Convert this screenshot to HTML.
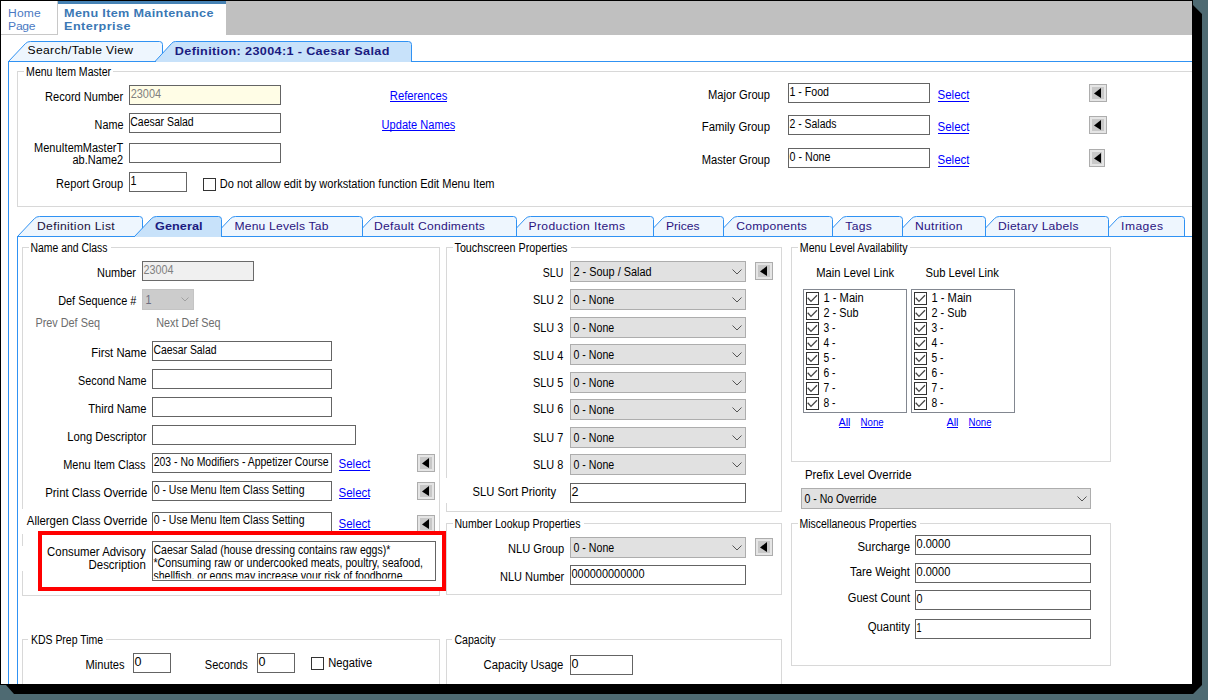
<!DOCTYPE html>
<html><head><meta charset="utf-8"><style>
html,body{margin:0;padding:0;width:1208px;height:700px;overflow:hidden;background:#4e6a72}
svg{display:block}
text{font-family:"Liberation Sans",sans-serif}
</style></head><body>
<svg width="1208" height="700" viewBox="0 0 1208 700">
<rect x="0" y="0" width="1208" height="700" fill="#4e6a72"/>
<polygon points="0,0 1193,0 1193,5 1202,14 1202,685 1193,694 14,694 6,685 0,685" fill="#000"/>
<rect x="1" y="1" width="1191" height="683" fill="#ffffff"/>
<rect x="1" y="34" width="57" height="1" fill="#c8c8c8"/>
<rect x="57" y="1" width="1" height="34" fill="#c8c8c8"/>
<rect x="58" y="1" width="168" height="3" fill="#4682b4"/>
<rect x="226" y="1" width="966" height="34" fill="#c0c0c0"/>
<g transform="translate(8.1,0) scale(1.1,1)"><text x="0" y="17" font-size="11" font-weight="400" fill="#4a78c2" textLength="29.64" lengthAdjust="spacing" font-family="Liberation Sans">Home</text></g>
<g transform="translate(8.1,0) scale(1.1,1)"><text x="0" y="30" font-size="11" font-weight="400" fill="#4a78c2" textLength="24.91" lengthAdjust="spacing" font-family="Liberation Sans">Page</text></g>
<g transform="translate(64.1,0) scale(1.15,1)"><text x="0" y="17" font-size="11" font-weight="700" fill="#3a78b5" textLength="129.91" lengthAdjust="spacing" font-family="Liberation Sans">Menu Item Maintenance</text></g>
<g transform="translate(64.1,0) scale(1.15,1)"><text x="0" y="30" font-size="11" font-weight="700" fill="#3a78b5" textLength="57.74" lengthAdjust="spacing" font-family="Liberation Sans">Enterprise</text></g>
<path d="M8.5,61.5 L25.5,43.5 Q27.5,41.5 30.5,41.5 L159.5,41.5 Q162.5,41.5 162.5,44.5 L162.5,61.5 Z" fill="#eef6fe" stroke="#3092f3" stroke-width="1" />
<path d="M155,61.5 L171.5,43.5 Q173,41.5 175.5,41.5 L408.5,41.5 Q411.5,41.5 411.5,44.5 L411.5,62 L155,62 Z" fill="#c8e2fa" stroke="none" stroke-width="1" />
<path d="M155,61.5 L171.5,43.5 Q173,41.5 175.5,41.5 L408.5,41.5 Q411.5,41.5 411.5,44.5 L411.5,61.5" fill="none" stroke="#3092f3" stroke-width="1" />
<rect x="8" y="61" width="148" height="1" fill="#3092f3"/>
<rect x="411" y="61" width="781" height="1" fill="#3092f3"/>
<rect x="8" y="61" width="1" height="623" fill="#3092f3"/>
<g transform="translate(27.6,0) scale(1.1,1)"><text x="0" y="54.5" font-size="11" font-weight="400" fill="#000" textLength="95.82" lengthAdjust="spacing" font-family="Liberation Sans">Search/Table View</text></g>
<g transform="translate(174.8,0) scale(1.15,1)"><text x="0" y="55" font-size="11" font-weight="700" fill="#1a1a80" textLength="186.61" lengthAdjust="spacing" font-family="Liberation Sans">Definition: 23004:1 - Caesar Salad</text></g>
<rect x="17" y="71" width="1175" height="1" fill="#d8d8d8"/>
<rect x="17" y="206" width="1175" height="1" fill="#d8d8d8"/>
<rect x="17" y="71" width="1" height="136" fill="#d8d8d8"/>
<rect x="24" y="64" width="89" height="12" fill="#fff"/>
<text x="26.1" y="76" font-size="12" font-weight="400" fill="#000" textLength="85.0" lengthAdjust="spacingAndGlyphs" font-family="Liberation Sans">Menu Item Master</text>
<text x="45.1" y="100.8" font-size="12" font-weight="400" fill="#000" textLength="78.1" lengthAdjust="spacingAndGlyphs" font-family="Liberation Sans">Record Number</text>
<text x="94.6" y="128.6" font-size="12" font-weight="400" fill="#000" textLength="28.8" lengthAdjust="spacingAndGlyphs" font-family="Liberation Sans">Name</text>
<text x="34.1" y="152" font-size="12" font-weight="400" fill="#000" textLength="89.0" lengthAdjust="spacingAndGlyphs" font-family="Liberation Sans">MenuItemMasterT</text>
<text x="72.5" y="164" font-size="12" font-weight="400" fill="#000" textLength="50.6" lengthAdjust="spacingAndGlyphs" font-family="Liberation Sans">ab.Name2</text>
<text x="56.1" y="187.6" font-size="12" font-weight="400" fill="#000" textLength="67.0" lengthAdjust="spacingAndGlyphs" font-family="Liberation Sans">Report Group</text>
<rect x="129" y="85" width="152" height="20" fill="#fffde6"/>
<rect x="129" y="85" width="152" height="1" fill="#646464"/>
<rect x="129" y="104" width="152" height="1" fill="#646464"/>
<rect x="129" y="85" width="1" height="20" fill="#646464"/>
<rect x="280" y="85" width="1" height="20" fill="#646464"/>
<text x="130.7" y="98" font-size="12" font-weight="400" fill="#808080" textLength="30.4" lengthAdjust="spacingAndGlyphs" font-family="Liberation Sans">23004</text>
<rect x="129" y="113" width="152" height="20" fill="#ffffff"/>
<rect x="129" y="113" width="152" height="1" fill="#646464"/>
<rect x="129" y="132" width="152" height="1" fill="#646464"/>
<rect x="129" y="113" width="1" height="20" fill="#646464"/>
<rect x="280" y="113" width="1" height="20" fill="#646464"/>
<text x="130.3" y="126" font-size="12" font-weight="400" fill="#000" textLength="63.4" lengthAdjust="spacingAndGlyphs" font-family="Liberation Sans">Caesar Salad</text>
<rect x="129" y="143" width="152" height="20" fill="#ffffff"/>
<rect x="129" y="143" width="152" height="1" fill="#646464"/>
<rect x="129" y="162" width="152" height="1" fill="#646464"/>
<rect x="129" y="143" width="1" height="20" fill="#646464"/>
<rect x="280" y="143" width="1" height="20" fill="#646464"/>
<rect x="129" y="172" width="58" height="20" fill="#ffffff"/>
<rect x="129" y="172" width="58" height="1" fill="#646464"/>
<rect x="129" y="191" width="58" height="1" fill="#646464"/>
<rect x="129" y="172" width="1" height="20" fill="#646464"/>
<rect x="186" y="172" width="1" height="20" fill="#646464"/>
<text x="130.5" y="185" font-size="12" font-weight="400" fill="#000" textLength="6.0" lengthAdjust="spacingAndGlyphs" font-family="Liberation Sans">1</text>
<rect x="203" y="178" width="13" height="13" fill="#ffffff"/>
<rect x="203" y="178" width="13" height="1" fill="#333333"/>
<rect x="203" y="190" width="13" height="1" fill="#333333"/>
<rect x="203" y="178" width="1" height="13" fill="#333333"/>
<rect x="215" y="178" width="1" height="13" fill="#333333"/>
<text x="219.8" y="187.6" font-size="12" font-weight="400" fill="#000" textLength="274.7" lengthAdjust="spacingAndGlyphs" font-family="Liberation Sans">Do not allow edit by workstation function Edit Menu Item</text>
<text x="389.8" y="99.5" font-size="12" font-weight="400" fill="#0000ff" textLength="57.6" lengthAdjust="spacingAndGlyphs" font-family="Liberation Sans">References</text>
<rect x="390" y="101" width="57" height="1" fill="#0000ff"/>
<text x="381.6" y="128.6" font-size="12" font-weight="400" fill="#0000ff" textLength="73.8" lengthAdjust="spacingAndGlyphs" font-family="Liberation Sans">Update Names</text>
<rect x="382" y="130" width="73" height="1" fill="#0000ff"/>
<text x="708.0" y="98.6" font-size="12" font-weight="400" fill="#000" textLength="62.0" lengthAdjust="spacingAndGlyphs" font-family="Liberation Sans">Major Group</text>
<text x="701.8" y="130.6" font-size="12" font-weight="400" fill="#000" textLength="68.2" lengthAdjust="spacingAndGlyphs" font-family="Liberation Sans">Family Group</text>
<text x="701.8" y="163.5" font-size="12" font-weight="400" fill="#000" textLength="68.2" lengthAdjust="spacingAndGlyphs" font-family="Liberation Sans">Master Group</text>
<rect x="788" y="83" width="142" height="20" fill="#ffffff"/>
<rect x="788" y="83" width="142" height="1" fill="#646464"/>
<rect x="788" y="102" width="142" height="1" fill="#646464"/>
<rect x="788" y="83" width="1" height="20" fill="#646464"/>
<rect x="929" y="83" width="1" height="20" fill="#646464"/>
<text x="789.5" y="96" font-size="12" font-weight="400" fill="#000" textLength="39.5" lengthAdjust="spacingAndGlyphs" font-family="Liberation Sans">1 - Food</text>
<rect x="788" y="115" width="142" height="20" fill="#ffffff"/>
<rect x="788" y="115" width="142" height="1" fill="#646464"/>
<rect x="788" y="134" width="142" height="1" fill="#646464"/>
<rect x="788" y="115" width="1" height="20" fill="#646464"/>
<rect x="929" y="115" width="1" height="20" fill="#646464"/>
<text x="789.5" y="128" font-size="12" font-weight="400" fill="#000" textLength="47.0" lengthAdjust="spacingAndGlyphs" font-family="Liberation Sans">2 - Salads</text>
<rect x="788" y="148" width="142" height="20" fill="#ffffff"/>
<rect x="788" y="148" width="142" height="1" fill="#646464"/>
<rect x="788" y="167" width="142" height="1" fill="#646464"/>
<rect x="788" y="148" width="1" height="20" fill="#646464"/>
<rect x="929" y="148" width="1" height="20" fill="#646464"/>
<text x="789.5" y="161" font-size="12" font-weight="400" fill="#000" textLength="41.0" lengthAdjust="spacingAndGlyphs" font-family="Liberation Sans">0 - None</text>
<text x="937.5" y="99.4" font-size="12" font-weight="400" fill="#0000ff" textLength="32.0" lengthAdjust="spacingAndGlyphs" font-family="Liberation Sans">Select</text>
<rect x="938" y="101" width="31" height="1" fill="#0000ff"/>
<text x="937.5" y="131.4" font-size="12" font-weight="400" fill="#0000ff" textLength="32.0" lengthAdjust="spacingAndGlyphs" font-family="Liberation Sans">Select</text>
<rect x="938" y="133" width="31" height="1" fill="#0000ff"/>
<text x="937.5" y="164.4" font-size="12" font-weight="400" fill="#0000ff" textLength="32.0" lengthAdjust="spacingAndGlyphs" font-family="Liberation Sans">Select</text>
<rect x="938" y="166" width="31" height="1" fill="#0000ff"/>
<rect x="1089" y="84" width="18" height="18" fill="#adadad"/>
<rect x="1090" y="85" width="16" height="16" fill="#e5e5e5"/>
<rect x="1092" y="87" width="12" height="12" fill="#c8c8c8"/>
<polygon points="1094,93.5 1101,88 1101,98" fill="#000"/>
<rect x="1089" y="116" width="18" height="18" fill="#adadad"/>
<rect x="1090" y="117" width="16" height="16" fill="#e5e5e5"/>
<rect x="1092" y="119" width="12" height="12" fill="#c8c8c8"/>
<polygon points="1094,125.5 1101,120 1101,130" fill="#000"/>
<rect x="1089" y="149" width="16" height="18" fill="#adadad"/>
<rect x="1090" y="150" width="14" height="16" fill="#e5e5e5"/>
<rect x="1092" y="152" width="10" height="12" fill="#c8c8c8"/>
<polygon points="1094,158.5 1101,153 1101,163" fill="#000"/>
<path d="M1100.5,236.5 L1117.5,218.5 Q1119.5,216.5 1122.5,216.5 L1181.5,216.5 Q1184.5,216.5 1184.5,219.5 L1184.5,236.5 Z" fill="#eef6fe" stroke="#3092f3" stroke-width="1" />
<path d="M977.5,236.5 L994.5,218.5 Q996.5,216.5 999.5,216.5 L1105.5,216.5 Q1108.5,216.5 1108.5,219.5 L1108.5,236.5 Z" fill="#eef6fe" stroke="#3092f3" stroke-width="1" />
<path d="M894.5,236.5 L911.5,218.5 Q913.5,216.5 916.5,216.5 L982.5,216.5 Q985.5,216.5 985.5,219.5 L985.5,236.5 Z" fill="#eef6fe" stroke="#3092f3" stroke-width="1" />
<path d="M824.5,236.5 L841.5,218.5 Q843.5,216.5 846.5,216.5 L899.5,216.5 Q902.5,216.5 902.5,219.5 L902.5,236.5 Z" fill="#eef6fe" stroke="#3092f3" stroke-width="1" />
<path d="M715.5,236.5 L732.5,218.5 Q734.5,216.5 737.5,216.5 L829.5,216.5 Q832.5,216.5 832.5,219.5 L832.5,236.5 Z" fill="#eef6fe" stroke="#3092f3" stroke-width="1" />
<path d="M645.5,236.5 L662.5,218.5 Q664.5,216.5 667.5,216.5 L720.5,216.5 Q723.5,216.5 723.5,219.5 L723.5,236.5 Z" fill="#eef6fe" stroke="#3092f3" stroke-width="1" />
<path d="M508.5,236.5 L525.5,218.5 Q527.5,216.5 530.5,216.5 L650.5,216.5 Q653.5,216.5 653.5,219.5 L653.5,236.5 Z" fill="#eef6fe" stroke="#3092f3" stroke-width="1" />
<path d="M354.5,236.5 L371.5,218.5 Q373.5,216.5 376.5,216.5 L513.5,216.5 Q516.5,216.5 516.5,219.5 L516.5,236.5 Z" fill="#eef6fe" stroke="#3092f3" stroke-width="1" />
<path d="M213.5,236.5 L230.5,218.5 Q232.5,216.5 235.5,216.5 L359.5,216.5 Q362.5,216.5 362.5,219.5 L362.5,236.5 Z" fill="#eef6fe" stroke="#3092f3" stroke-width="1" />
<path d="M17.5,236.5 L34.5,218.5 Q36.5,216.5 39.5,216.5 L139.5,216.5 Q142.5,216.5 142.5,219.5 L142.5,236.5 Z" fill="#eef6fe" stroke="#3092f3" stroke-width="1" />
<path d="M134.5,237 L134.5,236.5 L151.5,218.5 Q153.5,216.5 156.5,216.5 L218.5,216.5 Q221.5,216.5 221.5,219.5 L221.5,237 Z" fill="#c8e2fa" stroke="none" stroke-width="1" />
<path d="M134.5,236.5 L151.5,218.5 Q153.5,216.5 156.5,216.5 L218.5,216.5 Q221.5,216.5 221.5,219.5 L221.5,236.5" fill="none" stroke="#3092f3" stroke-width="1" />
<rect x="17" y="236" width="118" height="1" fill="#3092f3"/>
<rect x="221" y="236" width="971" height="1" fill="#3092f3"/>
<rect x="17" y="236" width="1" height="448" fill="#3092f3"/>
<g transform="translate(37.0,0) scale(1.1,1)"><text x="0" y="230" font-size="11" font-weight="400" fill="#20103a" textLength="70.64" lengthAdjust="spacing" font-family="Liberation Sans">Definition List</text></g>
<g transform="translate(155.1,0) scale(1.15,1)"><text x="0" y="230" font-size="11" font-weight="700" fill="#1a1a80" textLength="41.22" lengthAdjust="spacing" font-family="Liberation Sans">General</text></g>
<g transform="translate(234.5,0) scale(1.1,1)"><text x="0" y="230" font-size="11" font-weight="400" fill="#2a1380" textLength="85.45" lengthAdjust="spacing" font-family="Liberation Sans">Menu Levels Tab</text></g>
<g transform="translate(374.0,0) scale(1.1,1)"><text x="0" y="230" font-size="11" font-weight="400" fill="#2a1380" textLength="100.82" lengthAdjust="spacing" font-family="Liberation Sans">Default Condiments</text></g>
<g transform="translate(528.5,0) scale(1.1,1)"><text x="0" y="230" font-size="11" font-weight="400" fill="#2a1380" textLength="87.82" lengthAdjust="spacing" font-family="Liberation Sans">Production Items</text></g>
<g transform="translate(666.0,0) scale(1.1,1)"><text x="0" y="230" font-size="11" font-weight="400" fill="#2a1380" textLength="30.45" lengthAdjust="spacing" font-family="Liberation Sans">Prices</text></g>
<g transform="translate(736.3,0) scale(1.1,1)"><text x="0" y="230" font-size="11" font-weight="400" fill="#2a1380" textLength="64.18" lengthAdjust="spacing" font-family="Liberation Sans">Components</text></g>
<g transform="translate(845.3,0) scale(1.1,1)"><text x="0" y="230" font-size="11" font-weight="400" fill="#2a1380" textLength="24.18" lengthAdjust="spacing" font-family="Liberation Sans">Tags</text></g>
<g transform="translate(914.9,0) scale(1.1,1)"><text x="0" y="230" font-size="11" font-weight="400" fill="#2a1380" textLength="43.27" lengthAdjust="spacing" font-family="Liberation Sans">Nutrition</text></g>
<g transform="translate(998.0,0) scale(1.1,1)"><text x="0" y="230" font-size="11" font-weight="400" fill="#2a1380" textLength="73.18" lengthAdjust="spacing" font-family="Liberation Sans">Dietary Labels</text></g>
<g transform="translate(1121.1,0) scale(1.1,1)"><text x="0" y="230" font-size="11" font-weight="400" fill="#2a1380" textLength="38.09" lengthAdjust="spacing" font-family="Liberation Sans">Images</text></g>
<rect x="22" y="247" width="418" height="1" fill="#d8d8d8"/>
<rect x="22" y="595" width="418" height="1" fill="#d8d8d8"/>
<rect x="22" y="247" width="1" height="349" fill="#d8d8d8"/>
<rect x="439" y="247" width="1" height="349" fill="#d8d8d8"/>
<rect x="29" y="241" width="82" height="12" fill="#fff"/>
<text x="30.5" y="251.6" font-size="12" font-weight="400" fill="#000" textLength="77.0" lengthAdjust="spacingAndGlyphs" font-family="Liberation Sans">Name and Class</text>
<text x="97.1" y="276.9" font-size="12" font-weight="400" fill="#000" textLength="38.9" lengthAdjust="spacingAndGlyphs" font-family="Liberation Sans">Number</text>
<rect x="142" y="261" width="112" height="20" fill="#f0f0f0"/>
<rect x="142" y="261" width="112" height="1" fill="#6a6a6a"/>
<rect x="142" y="280" width="112" height="1" fill="#6a6a6a"/>
<rect x="142" y="261" width="1" height="20" fill="#6a6a6a"/>
<rect x="253" y="261" width="1" height="20" fill="#6a6a6a"/>
<text x="143.5" y="274" font-size="12" font-weight="400" fill="#808080" textLength="30.0" lengthAdjust="spacingAndGlyphs" font-family="Liberation Sans">23004</text>
<text x="58.2" y="304.5" font-size="12" font-weight="400" fill="#000" textLength="78.1" lengthAdjust="spacingAndGlyphs" font-family="Liberation Sans">Def Sequence #</text>
<rect x="142" y="289" width="52" height="21" fill="#cccccc"/>
<rect x="142" y="289" width="52" height="1" fill="#c4c4c4"/>
<rect x="142" y="309" width="52" height="1" fill="#c4c4c4"/>
<rect x="142" y="289" width="1" height="21" fill="#c4c4c4"/>
<rect x="193" y="289" width="1" height="21" fill="#c4c4c4"/>
<text x="145.5" y="303.5" font-size="12" font-weight="400" fill="#6d6d80" textLength="6.0" lengthAdjust="spacingAndGlyphs" font-family="Liberation Sans">1</text>
<path d="M181.5,297.5 L185,301 L188.5,297.5" fill="none" stroke="#a0a0a0" stroke-width="1" />
<text x="35.4" y="327" font-size="12" font-weight="400" fill="#6d6d6d" textLength="64.6" lengthAdjust="spacingAndGlyphs" font-family="Liberation Sans">Prev Def Seq</text>
<text x="156.2" y="327" font-size="12" font-weight="400" fill="#6d6d6d" textLength="64.3" lengthAdjust="spacingAndGlyphs" font-family="Liberation Sans">Next Def Seq</text>
<text x="91.3" y="356.5" font-size="12" font-weight="400" fill="#000" textLength="55.2" lengthAdjust="spacingAndGlyphs" font-family="Liberation Sans">First Name</text>
<text x="78.0" y="384.5" font-size="12" font-weight="400" fill="#000" textLength="68.5" lengthAdjust="spacingAndGlyphs" font-family="Liberation Sans">Second Name</text>
<text x="88.2" y="412.5" font-size="12" font-weight="400" fill="#000" textLength="58.3" lengthAdjust="spacingAndGlyphs" font-family="Liberation Sans">Third Name</text>
<text x="67.3" y="440.5" font-size="12" font-weight="400" fill="#000" textLength="79.2" lengthAdjust="spacingAndGlyphs" font-family="Liberation Sans">Long Descriptor</text>
<rect x="152" y="341" width="180" height="20" fill="#ffffff"/>
<rect x="152" y="341" width="180" height="1" fill="#646464"/>
<rect x="152" y="360" width="180" height="1" fill="#646464"/>
<rect x="152" y="341" width="1" height="20" fill="#646464"/>
<rect x="331" y="341" width="1" height="20" fill="#646464"/>
<text x="153.5" y="354" font-size="12" font-weight="400" fill="#000" textLength="63.0" lengthAdjust="spacingAndGlyphs" font-family="Liberation Sans">Caesar Salad</text>
<rect x="152" y="369" width="180" height="20" fill="#ffffff"/>
<rect x="152" y="369" width="180" height="1" fill="#646464"/>
<rect x="152" y="388" width="180" height="1" fill="#646464"/>
<rect x="152" y="369" width="1" height="20" fill="#646464"/>
<rect x="331" y="369" width="1" height="20" fill="#646464"/>
<rect x="152" y="397" width="180" height="20" fill="#ffffff"/>
<rect x="152" y="397" width="180" height="1" fill="#646464"/>
<rect x="152" y="416" width="180" height="1" fill="#646464"/>
<rect x="152" y="397" width="1" height="20" fill="#646464"/>
<rect x="331" y="397" width="1" height="20" fill="#646464"/>
<rect x="152" y="425" width="204" height="20" fill="#ffffff"/>
<rect x="152" y="425" width="204" height="1" fill="#646464"/>
<rect x="152" y="444" width="204" height="1" fill="#646464"/>
<rect x="152" y="425" width="1" height="20" fill="#646464"/>
<rect x="355" y="425" width="1" height="20" fill="#646464"/>
<text x="63.2" y="468.8" font-size="12" font-weight="400" fill="#000" textLength="82.3" lengthAdjust="spacingAndGlyphs" font-family="Liberation Sans">Menu Item Class</text>
<text x="45.2" y="496.7" font-size="12" font-weight="400" fill="#000" textLength="102.1" lengthAdjust="spacingAndGlyphs" font-family="Liberation Sans">Print Class Override</text>
<rect x="22" y="509" width="124" height="25" fill="#fff"/>
<text x="26.8" y="525.2" font-size="12" font-weight="400" fill="#000" textLength="120.5" lengthAdjust="spacingAndGlyphs" font-family="Liberation Sans">Allergen Class Override</text>
<rect x="152" y="453" width="180" height="20" fill="#ffffff"/>
<rect x="152" y="453" width="180" height="1" fill="#646464"/>
<rect x="152" y="472" width="180" height="1" fill="#646464"/>
<rect x="152" y="453" width="1" height="20" fill="#646464"/>
<rect x="331" y="453" width="1" height="20" fill="#646464"/>
<text x="153.7" y="465.8" font-size="12" font-weight="400" fill="#000" textLength="174.8" lengthAdjust="spacingAndGlyphs" font-family="Liberation Sans">203 - No Modifiers - Appetizer Course</text>
<rect x="152" y="481" width="180" height="20" fill="#ffffff"/>
<rect x="152" y="481" width="180" height="1" fill="#646464"/>
<rect x="152" y="500" width="180" height="1" fill="#646464"/>
<rect x="152" y="481" width="1" height="20" fill="#646464"/>
<rect x="331" y="481" width="1" height="20" fill="#646464"/>
<text x="153.7" y="493.7" font-size="12" font-weight="400" fill="#000" textLength="150.8" lengthAdjust="spacingAndGlyphs" font-family="Liberation Sans">0 - Use Menu Item Class Setting</text>
<rect x="152" y="512" width="180" height="20" fill="#ffffff"/>
<rect x="152" y="512" width="180" height="1" fill="#646464"/>
<rect x="152" y="531" width="180" height="1" fill="#646464"/>
<rect x="152" y="512" width="1" height="20" fill="#646464"/>
<rect x="331" y="512" width="1" height="20" fill="#646464"/>
<text x="153.7" y="524.3" font-size="12" font-weight="400" fill="#000" textLength="150.8" lengthAdjust="spacingAndGlyphs" font-family="Liberation Sans">0 - Use Menu Item Class Setting</text>
<text x="338.5" y="468.4" font-size="12" font-weight="400" fill="#0000ff" textLength="32.0" lengthAdjust="spacingAndGlyphs" font-family="Liberation Sans">Select</text>
<rect x="339" y="470" width="31" height="1" fill="#0000ff"/>
<text x="338.5" y="496.9" font-size="12" font-weight="400" fill="#0000ff" textLength="32.0" lengthAdjust="spacingAndGlyphs" font-family="Liberation Sans">Select</text>
<rect x="339" y="498" width="31" height="1" fill="#0000ff"/>
<text x="338.5" y="527.6" font-size="12" font-weight="400" fill="#0000ff" textLength="32.0" lengthAdjust="spacingAndGlyphs" font-family="Liberation Sans">Select</text>
<rect x="339" y="529" width="31" height="1" fill="#0000ff"/>
<rect x="417" y="454" width="18" height="18" fill="#adadad"/>
<rect x="418" y="455" width="16" height="16" fill="#e5e5e5"/>
<rect x="420" y="457" width="12" height="12" fill="#c8c8c8"/>
<polygon points="422,463.5 429,458 429,468" fill="#000"/>
<rect x="417" y="482" width="18" height="18" fill="#adadad"/>
<rect x="418" y="483" width="16" height="16" fill="#e5e5e5"/>
<rect x="420" y="485" width="12" height="12" fill="#c8c8c8"/>
<polygon points="422,491.5 429,486 429,496" fill="#000"/>
<rect x="417" y="515" width="18" height="18" fill="#adadad"/>
<rect x="418" y="516" width="16" height="16" fill="#e5e5e5"/>
<rect x="420" y="518" width="12" height="12" fill="#c8c8c8"/>
<polygon points="422,524.5 429,519 429,529" fill="#000"/>
<rect x="38" y="531" width="408" height="60" fill="#ff0000"/>
<rect x="42" y="535" width="400" height="52" fill="#ffffff"/>
<rect x="22" y="546" width="16" height="25" fill="#fff"/>
<text x="47.1" y="556" font-size="12" font-weight="400" fill="#000" textLength="98.7" lengthAdjust="spacingAndGlyphs" font-family="Liberation Sans">Consumer Advisory</text>
<text x="88.5" y="569" font-size="12" font-weight="400" fill="#000" textLength="57.3" lengthAdjust="spacingAndGlyphs" font-family="Liberation Sans">Description</text>
<rect x="152" y="541" width="284" height="40" fill="#ffffff"/>
<rect x="152" y="541" width="284" height="1" fill="#646464"/>
<rect x="152" y="580" width="284" height="1" fill="#646464"/>
<rect x="152" y="541" width="1" height="40" fill="#646464"/>
<rect x="435" y="541" width="1" height="40" fill="#646464"/>
<text x="153.5" y="554" font-size="12" font-weight="400" fill="#000" textLength="236.8" lengthAdjust="spacingAndGlyphs" font-family="Liberation Sans">Caesar Salad (house dressing contains raw eggs)*</text>
<text x="153.5" y="567" font-size="12" font-weight="400" fill="#000" textLength="269.5" lengthAdjust="spacingAndGlyphs" font-family="Liberation Sans">*Consuming raw or undercooked meats, poultry, seafood,</text>
<clipPath id="cl"><rect x="153" y="542" width="282" height="36.5"/></clipPath>
<g clip-path="url(#cl)">
<text x="153.5" y="580" font-size="12" font-weight="400" fill="#000" textLength="249.0" lengthAdjust="spacingAndGlyphs" font-family="Liberation Sans">shellfish, or eggs may increase your risk of foodborne</text>
</g>
<rect x="446" y="247" width="336" height="1" fill="#d8d8d8"/>
<rect x="446" y="511" width="336" height="1" fill="#d8d8d8"/>
<rect x="446" y="247" width="1" height="265" fill="#d8d8d8"/>
<rect x="781" y="247" width="1" height="265" fill="#d8d8d8"/>
<rect x="453" y="241" width="118" height="12" fill="#fff"/>
<text x="454.5" y="252.2" font-size="12" font-weight="400" fill="#000" textLength="113.0" lengthAdjust="spacingAndGlyphs" font-family="Liberation Sans">Touchscreen Properties</text>
<text x="542.8" y="276.8" font-size="12" font-weight="400" fill="#000" textLength="20.5" lengthAdjust="spacingAndGlyphs" font-family="Liberation Sans">SLU</text>
<rect x="570" y="261" width="176" height="21" fill="#e1e1e1"/>
<rect x="570" y="261" width="176" height="1" fill="#adadad"/>
<rect x="570" y="281" width="176" height="1" fill="#adadad"/>
<rect x="570" y="261" width="1" height="21" fill="#adadad"/>
<rect x="745" y="261" width="1" height="21" fill="#adadad"/>
<text x="573.5" y="276" font-size="12" font-weight="400" fill="#000" textLength="78.0" lengthAdjust="spacingAndGlyphs" font-family="Liberation Sans">2 - Soup / Salad</text>
<path d="M732.5,269.5 L737,274 L741.5,269.5" fill="none" stroke="#555555" stroke-width="1" />
<text x="533.0" y="304.2" font-size="12" font-weight="400" fill="#000" textLength="30.3" lengthAdjust="spacingAndGlyphs" font-family="Liberation Sans">SLU 2</text>
<rect x="570" y="289" width="176" height="21" fill="#e1e1e1"/>
<rect x="570" y="289" width="176" height="1" fill="#adadad"/>
<rect x="570" y="309" width="176" height="1" fill="#adadad"/>
<rect x="570" y="289" width="1" height="21" fill="#adadad"/>
<rect x="745" y="289" width="1" height="21" fill="#adadad"/>
<text x="573.5" y="304" font-size="12" font-weight="400" fill="#000" textLength="40.7" lengthAdjust="spacingAndGlyphs" font-family="Liberation Sans">0 - None</text>
<path d="M732.5,297.5 L737,302 L741.5,297.5" fill="none" stroke="#555555" stroke-width="1" />
<text x="533.0" y="331.6" font-size="12" font-weight="400" fill="#000" textLength="30.3" lengthAdjust="spacingAndGlyphs" font-family="Liberation Sans">SLU 3</text>
<rect x="570" y="317" width="176" height="21" fill="#e1e1e1"/>
<rect x="570" y="317" width="176" height="1" fill="#adadad"/>
<rect x="570" y="337" width="176" height="1" fill="#adadad"/>
<rect x="570" y="317" width="1" height="21" fill="#adadad"/>
<rect x="745" y="317" width="1" height="21" fill="#adadad"/>
<text x="573.5" y="332" font-size="12" font-weight="400" fill="#000" textLength="40.7" lengthAdjust="spacingAndGlyphs" font-family="Liberation Sans">0 - None</text>
<path d="M732.5,325.5 L737,330 L741.5,325.5" fill="none" stroke="#555555" stroke-width="1" />
<text x="533.0" y="359.5" font-size="12" font-weight="400" fill="#000" textLength="30.3" lengthAdjust="spacingAndGlyphs" font-family="Liberation Sans">SLU 4</text>
<rect x="570" y="344" width="176" height="21" fill="#e1e1e1"/>
<rect x="570" y="344" width="176" height="1" fill="#adadad"/>
<rect x="570" y="364" width="176" height="1" fill="#adadad"/>
<rect x="570" y="344" width="1" height="21" fill="#adadad"/>
<rect x="745" y="344" width="1" height="21" fill="#adadad"/>
<text x="573.5" y="359" font-size="12" font-weight="400" fill="#000" textLength="40.7" lengthAdjust="spacingAndGlyphs" font-family="Liberation Sans">0 - None</text>
<path d="M732.5,352.5 L737,357 L741.5,352.5" fill="none" stroke="#555555" stroke-width="1" />
<text x="533.0" y="386.5" font-size="12" font-weight="400" fill="#000" textLength="30.3" lengthAdjust="spacingAndGlyphs" font-family="Liberation Sans">SLU 5</text>
<rect x="570" y="372" width="176" height="21" fill="#e1e1e1"/>
<rect x="570" y="372" width="176" height="1" fill="#adadad"/>
<rect x="570" y="392" width="176" height="1" fill="#adadad"/>
<rect x="570" y="372" width="1" height="21" fill="#adadad"/>
<rect x="745" y="372" width="1" height="21" fill="#adadad"/>
<text x="573.5" y="387" font-size="12" font-weight="400" fill="#000" textLength="40.7" lengthAdjust="spacingAndGlyphs" font-family="Liberation Sans">0 - None</text>
<path d="M732.5,380.5 L737,385 L741.5,380.5" fill="none" stroke="#555555" stroke-width="1" />
<text x="533.0" y="412.6" font-size="12" font-weight="400" fill="#000" textLength="30.3" lengthAdjust="spacingAndGlyphs" font-family="Liberation Sans">SLU 6</text>
<rect x="570" y="399" width="176" height="21" fill="#e1e1e1"/>
<rect x="570" y="399" width="176" height="1" fill="#adadad"/>
<rect x="570" y="419" width="176" height="1" fill="#adadad"/>
<rect x="570" y="399" width="1" height="21" fill="#adadad"/>
<rect x="745" y="399" width="1" height="21" fill="#adadad"/>
<text x="573.5" y="414" font-size="12" font-weight="400" fill="#000" textLength="40.7" lengthAdjust="spacingAndGlyphs" font-family="Liberation Sans">0 - None</text>
<path d="M732.5,407.5 L737,412 L741.5,407.5" fill="none" stroke="#555555" stroke-width="1" />
<text x="533.0" y="441.5" font-size="12" font-weight="400" fill="#000" textLength="30.3" lengthAdjust="spacingAndGlyphs" font-family="Liberation Sans">SLU 7</text>
<rect x="570" y="427" width="176" height="21" fill="#e1e1e1"/>
<rect x="570" y="427" width="176" height="1" fill="#adadad"/>
<rect x="570" y="447" width="176" height="1" fill="#adadad"/>
<rect x="570" y="427" width="1" height="21" fill="#adadad"/>
<rect x="745" y="427" width="1" height="21" fill="#adadad"/>
<text x="573.5" y="442" font-size="12" font-weight="400" fill="#000" textLength="40.7" lengthAdjust="spacingAndGlyphs" font-family="Liberation Sans">0 - None</text>
<path d="M732.5,435.5 L737,440 L741.5,435.5" fill="none" stroke="#555555" stroke-width="1" />
<text x="533.0" y="468.5" font-size="12" font-weight="400" fill="#000" textLength="30.3" lengthAdjust="spacingAndGlyphs" font-family="Liberation Sans">SLU 8</text>
<rect x="570" y="454" width="176" height="21" fill="#e1e1e1"/>
<rect x="570" y="454" width="176" height="1" fill="#adadad"/>
<rect x="570" y="474" width="176" height="1" fill="#adadad"/>
<rect x="570" y="454" width="1" height="21" fill="#adadad"/>
<rect x="745" y="454" width="1" height="21" fill="#adadad"/>
<text x="573.5" y="469" font-size="12" font-weight="400" fill="#000" textLength="40.7" lengthAdjust="spacingAndGlyphs" font-family="Liberation Sans">0 - None</text>
<path d="M732.5,462.5 L737,467 L741.5,462.5" fill="none" stroke="#555555" stroke-width="1" />
<rect x="755" y="262" width="18" height="18" fill="#adadad"/>
<rect x="756" y="263" width="16" height="16" fill="#e5e5e5"/>
<rect x="758" y="265" width="12" height="12" fill="#c8c8c8"/>
<polygon points="760,271.5 767,266 767,276" fill="#000"/>
<rect x="446" y="478" width="114" height="25" fill="#fff"/>
<text x="472.5" y="496" font-size="12" font-weight="400" fill="#000" textLength="83.6" lengthAdjust="spacingAndGlyphs" font-family="Liberation Sans">SLU Sort Priority</text>
<rect x="570" y="483" width="176" height="20" fill="#ffffff"/>
<rect x="570" y="483" width="176" height="1" fill="#646464"/>
<rect x="570" y="502" width="176" height="1" fill="#646464"/>
<rect x="570" y="483" width="1" height="20" fill="#646464"/>
<rect x="745" y="483" width="1" height="20" fill="#646464"/>
<text x="571.5" y="496" font-size="12" font-weight="400" fill="#000" textLength="7.0" lengthAdjust="spacingAndGlyphs" font-family="Liberation Sans">2</text>
<rect x="446" y="523" width="336" height="1" fill="#d8d8d8"/>
<rect x="446" y="594" width="336" height="1" fill="#d8d8d8"/>
<rect x="446" y="523" width="1" height="72" fill="#d8d8d8"/>
<rect x="781" y="523" width="1" height="72" fill="#d8d8d8"/>
<rect x="453" y="517" width="131" height="12" fill="#fff"/>
<text x="454.5" y="528.2" font-size="12" font-weight="400" fill="#000" textLength="126.0" lengthAdjust="spacingAndGlyphs" font-family="Liberation Sans">Number Lookup Properties</text>
<text x="508.0" y="552.5" font-size="12" font-weight="400" fill="#000" textLength="56.2" lengthAdjust="spacingAndGlyphs" font-family="Liberation Sans">NLU Group</text>
<rect x="570" y="537" width="176" height="21" fill="#e1e1e1"/>
<rect x="570" y="537" width="176" height="1" fill="#adadad"/>
<rect x="570" y="557" width="176" height="1" fill="#adadad"/>
<rect x="570" y="537" width="1" height="21" fill="#adadad"/>
<rect x="745" y="537" width="1" height="21" fill="#adadad"/>
<text x="573.5" y="552" font-size="12" font-weight="400" fill="#000" textLength="40.7" lengthAdjust="spacingAndGlyphs" font-family="Liberation Sans">0 - None</text>
<path d="M732.5,545.5 L737,550 L741.5,545.5" fill="none" stroke="#555555" stroke-width="1" />
<rect x="755" y="538" width="18" height="18" fill="#adadad"/>
<rect x="756" y="539" width="16" height="16" fill="#e5e5e5"/>
<rect x="758" y="541" width="12" height="12" fill="#c8c8c8"/>
<polygon points="760,547.5 767,542 767,552" fill="#000"/>
<text x="500.0" y="580.5" font-size="12" font-weight="400" fill="#000" textLength="64.2" lengthAdjust="spacingAndGlyphs" font-family="Liberation Sans">NLU Number</text>
<rect x="570" y="565" width="176" height="20" fill="#ffffff"/>
<rect x="570" y="565" width="176" height="1" fill="#646464"/>
<rect x="570" y="584" width="176" height="1" fill="#646464"/>
<rect x="570" y="565" width="1" height="20" fill="#646464"/>
<rect x="745" y="565" width="1" height="20" fill="#646464"/>
<text x="571.5" y="578" font-size="12" font-weight="400" fill="#000" textLength="73.0" lengthAdjust="spacingAndGlyphs" font-family="Liberation Sans">000000000000</text>
<rect x="446" y="639" width="336" height="1" fill="#d8d8d8"/>
<rect x="446" y="639" width="1" height="45" fill="#d8d8d8"/>
<rect x="781" y="639" width="1" height="45" fill="#d8d8d8"/>
<rect x="452" y="633" width="47" height="12" fill="#fff"/>
<text x="454.5" y="643.7" font-size="12" font-weight="400" fill="#000" textLength="41.0" lengthAdjust="spacingAndGlyphs" font-family="Liberation Sans">Capacity</text>
<text x="483.5" y="668.6" font-size="12" font-weight="400" fill="#000" textLength="79.8" lengthAdjust="spacingAndGlyphs" font-family="Liberation Sans">Capacity Usage</text>
<rect x="570" y="655" width="63" height="20" fill="#ffffff"/>
<rect x="570" y="655" width="63" height="1" fill="#646464"/>
<rect x="570" y="674" width="63" height="1" fill="#646464"/>
<rect x="570" y="655" width="1" height="20" fill="#646464"/>
<rect x="632" y="655" width="1" height="20" fill="#646464"/>
<text x="571.5" y="668" font-size="12" font-weight="400" fill="#000" textLength="7.0" lengthAdjust="spacingAndGlyphs" font-family="Liberation Sans">0</text>
<rect x="22" y="639" width="418" height="1" fill="#d8d8d8"/>
<rect x="22" y="639" width="1" height="45" fill="#d8d8d8"/>
<rect x="439" y="639" width="1" height="45" fill="#d8d8d8"/>
<rect x="28" y="633" width="78" height="12" fill="#fff"/>
<text x="30.9" y="644" font-size="12" font-weight="400" fill="#000" textLength="72.3" lengthAdjust="spacingAndGlyphs" font-family="Liberation Sans">KDS Prep Time</text>
<text x="85.5" y="668.9" font-size="12" font-weight="400" fill="#000" textLength="39.0" lengthAdjust="spacingAndGlyphs" font-family="Liberation Sans">Minutes</text>
<rect x="133" y="653" width="38" height="20" fill="#ffffff"/>
<rect x="133" y="653" width="38" height="1" fill="#646464"/>
<rect x="133" y="672" width="38" height="1" fill="#646464"/>
<rect x="133" y="653" width="1" height="20" fill="#646464"/>
<rect x="170" y="653" width="1" height="20" fill="#646464"/>
<text x="134.5" y="666" font-size="12" font-weight="400" fill="#000" textLength="7.0" lengthAdjust="spacingAndGlyphs" font-family="Liberation Sans">0</text>
<text x="204.8" y="668.9" font-size="12" font-weight="400" fill="#000" textLength="42.9" lengthAdjust="spacingAndGlyphs" font-family="Liberation Sans">Seconds</text>
<rect x="257" y="653" width="38" height="20" fill="#ffffff"/>
<rect x="257" y="653" width="38" height="1" fill="#646464"/>
<rect x="257" y="672" width="38" height="1" fill="#646464"/>
<rect x="257" y="653" width="1" height="20" fill="#646464"/>
<rect x="294" y="653" width="1" height="20" fill="#646464"/>
<text x="258.5" y="666" font-size="12" font-weight="400" fill="#000" textLength="7.0" lengthAdjust="spacingAndGlyphs" font-family="Liberation Sans">0</text>
<rect x="311" y="657" width="13" height="13" fill="#ffffff"/>
<rect x="311" y="657" width="13" height="1" fill="#333333"/>
<rect x="311" y="669" width="13" height="1" fill="#333333"/>
<rect x="311" y="657" width="1" height="13" fill="#333333"/>
<rect x="323" y="657" width="1" height="13" fill="#333333"/>
<text x="328.3" y="666.8" font-size="12" font-weight="400" fill="#000" textLength="44.0" lengthAdjust="spacingAndGlyphs" font-family="Liberation Sans">Negative</text>
<rect x="791" y="247" width="320" height="1" fill="#d8d8d8"/>
<rect x="791" y="461" width="320" height="1" fill="#d8d8d8"/>
<rect x="791" y="247" width="1" height="215" fill="#d8d8d8"/>
<rect x="1110" y="247" width="1" height="215" fill="#d8d8d8"/>
<rect x="798" y="241" width="112" height="12" fill="#fff"/>
<text x="799.8" y="251.8" font-size="12" font-weight="400" fill="#000" textLength="107.7" lengthAdjust="spacingAndGlyphs" font-family="Liberation Sans">Menu Level Availability</text>
<text x="816.2" y="276.6" font-size="12" font-weight="400" fill="#000" textLength="77.8" lengthAdjust="spacingAndGlyphs" font-family="Liberation Sans">Main Level Link</text>
<text x="925.5" y="276.6" font-size="12" font-weight="400" fill="#000" textLength="73.4" lengthAdjust="spacingAndGlyphs" font-family="Liberation Sans">Sub Level Link</text>
<rect x="803" y="289" width="104" height="124" fill="#ffffff"/>
<rect x="803" y="289" width="104" height="1" fill="#828790"/>
<rect x="803" y="412" width="104" height="1" fill="#828790"/>
<rect x="803" y="289" width="1" height="124" fill="#828790"/>
<rect x="906" y="289" width="1" height="124" fill="#828790"/>
<rect x="806" y="292" width="13" height="13" fill="#ffffff"/>
<rect x="806" y="292" width="13" height="1" fill="#333333"/>
<rect x="806" y="304" width="13" height="1" fill="#333333"/>
<rect x="806" y="292" width="1" height="13" fill="#333333"/>
<rect x="818" y="292" width="1" height="13" fill="#333333"/>
<path d="M807.7,297.8 L811,301.4 L817,295.3" fill="none" stroke="#444444" stroke-width="1.3" />
<rect x="806" y="307" width="13" height="13" fill="#ffffff"/>
<rect x="806" y="307" width="13" height="1" fill="#333333"/>
<rect x="806" y="319" width="13" height="1" fill="#333333"/>
<rect x="806" y="307" width="1" height="13" fill="#333333"/>
<rect x="818" y="307" width="1" height="13" fill="#333333"/>
<path d="M807.7,312.8 L811,316.4 L817,310.3" fill="none" stroke="#444444" stroke-width="1.3" />
<rect x="806" y="322" width="13" height="13" fill="#ffffff"/>
<rect x="806" y="322" width="13" height="1" fill="#333333"/>
<rect x="806" y="334" width="13" height="1" fill="#333333"/>
<rect x="806" y="322" width="1" height="13" fill="#333333"/>
<rect x="818" y="322" width="1" height="13" fill="#333333"/>
<path d="M807.7,327.8 L811,331.4 L817,325.3" fill="none" stroke="#444444" stroke-width="1.3" />
<rect x="806" y="337" width="13" height="13" fill="#ffffff"/>
<rect x="806" y="337" width="13" height="1" fill="#333333"/>
<rect x="806" y="349" width="13" height="1" fill="#333333"/>
<rect x="806" y="337" width="1" height="13" fill="#333333"/>
<rect x="818" y="337" width="1" height="13" fill="#333333"/>
<path d="M807.7,342.8 L811,346.4 L817,340.3" fill="none" stroke="#444444" stroke-width="1.3" />
<rect x="806" y="352" width="13" height="13" fill="#ffffff"/>
<rect x="806" y="352" width="13" height="1" fill="#333333"/>
<rect x="806" y="364" width="13" height="1" fill="#333333"/>
<rect x="806" y="352" width="1" height="13" fill="#333333"/>
<rect x="818" y="352" width="1" height="13" fill="#333333"/>
<path d="M807.7,357.8 L811,361.4 L817,355.3" fill="none" stroke="#444444" stroke-width="1.3" />
<rect x="806" y="367" width="13" height="13" fill="#ffffff"/>
<rect x="806" y="367" width="13" height="1" fill="#333333"/>
<rect x="806" y="379" width="13" height="1" fill="#333333"/>
<rect x="806" y="367" width="1" height="13" fill="#333333"/>
<rect x="818" y="367" width="1" height="13" fill="#333333"/>
<path d="M807.7,372.8 L811,376.4 L817,370.3" fill="none" stroke="#444444" stroke-width="1.3" />
<rect x="806" y="382" width="13" height="13" fill="#ffffff"/>
<rect x="806" y="382" width="13" height="1" fill="#333333"/>
<rect x="806" y="394" width="13" height="1" fill="#333333"/>
<rect x="806" y="382" width="1" height="13" fill="#333333"/>
<rect x="818" y="382" width="1" height="13" fill="#333333"/>
<path d="M807.7,387.8 L811,391.4 L817,385.3" fill="none" stroke="#444444" stroke-width="1.3" />
<rect x="806" y="397" width="13" height="13" fill="#ffffff"/>
<rect x="806" y="397" width="13" height="1" fill="#333333"/>
<rect x="806" y="409" width="13" height="1" fill="#333333"/>
<rect x="806" y="397" width="1" height="13" fill="#333333"/>
<rect x="818" y="397" width="1" height="13" fill="#333333"/>
<path d="M807.7,402.8 L811,406.4 L817,400.3" fill="none" stroke="#444444" stroke-width="1.3" />
<text x="823.5" y="302" font-size="12" font-weight="400" fill="#000" textLength="40.3" lengthAdjust="spacingAndGlyphs" font-family="Liberation Sans">1 - Main</text>
<text x="823.5" y="317" font-size="12" font-weight="400" fill="#000" textLength="35.0" lengthAdjust="spacingAndGlyphs" font-family="Liberation Sans">2 - Sub</text>
<text x="823.5" y="332" font-size="12" font-weight="400" fill="#000" textLength="12.0" lengthAdjust="spacingAndGlyphs" font-family="Liberation Sans">3 -</text>
<text x="823.5" y="347" font-size="12" font-weight="400" fill="#000" textLength="12.0" lengthAdjust="spacingAndGlyphs" font-family="Liberation Sans">4 -</text>
<text x="823.5" y="362" font-size="12" font-weight="400" fill="#000" textLength="12.0" lengthAdjust="spacingAndGlyphs" font-family="Liberation Sans">5 -</text>
<text x="823.5" y="377" font-size="12" font-weight="400" fill="#000" textLength="12.0" lengthAdjust="spacingAndGlyphs" font-family="Liberation Sans">6 -</text>
<text x="823.5" y="392" font-size="12" font-weight="400" fill="#000" textLength="12.0" lengthAdjust="spacingAndGlyphs" font-family="Liberation Sans">7 -</text>
<text x="823.5" y="407" font-size="12" font-weight="400" fill="#000" textLength="12.0" lengthAdjust="spacingAndGlyphs" font-family="Liberation Sans">8 -</text>
<rect x="911" y="289" width="104" height="124" fill="#ffffff"/>
<rect x="911" y="289" width="104" height="1" fill="#828790"/>
<rect x="911" y="412" width="104" height="1" fill="#828790"/>
<rect x="911" y="289" width="1" height="124" fill="#828790"/>
<rect x="1014" y="289" width="1" height="124" fill="#828790"/>
<rect x="914" y="292" width="13" height="13" fill="#ffffff"/>
<rect x="914" y="292" width="13" height="1" fill="#333333"/>
<rect x="914" y="304" width="13" height="1" fill="#333333"/>
<rect x="914" y="292" width="1" height="13" fill="#333333"/>
<rect x="926" y="292" width="1" height="13" fill="#333333"/>
<path d="M915.7,297.8 L919,301.4 L925,295.3" fill="none" stroke="#444444" stroke-width="1.3" />
<rect x="914" y="307" width="13" height="13" fill="#ffffff"/>
<rect x="914" y="307" width="13" height="1" fill="#333333"/>
<rect x="914" y="319" width="13" height="1" fill="#333333"/>
<rect x="914" y="307" width="1" height="13" fill="#333333"/>
<rect x="926" y="307" width="1" height="13" fill="#333333"/>
<path d="M915.7,312.8 L919,316.4 L925,310.3" fill="none" stroke="#444444" stroke-width="1.3" />
<rect x="914" y="322" width="13" height="13" fill="#ffffff"/>
<rect x="914" y="322" width="13" height="1" fill="#333333"/>
<rect x="914" y="334" width="13" height="1" fill="#333333"/>
<rect x="914" y="322" width="1" height="13" fill="#333333"/>
<rect x="926" y="322" width="1" height="13" fill="#333333"/>
<path d="M915.7,327.8 L919,331.4 L925,325.3" fill="none" stroke="#444444" stroke-width="1.3" />
<rect x="914" y="337" width="13" height="13" fill="#ffffff"/>
<rect x="914" y="337" width="13" height="1" fill="#333333"/>
<rect x="914" y="349" width="13" height="1" fill="#333333"/>
<rect x="914" y="337" width="1" height="13" fill="#333333"/>
<rect x="926" y="337" width="1" height="13" fill="#333333"/>
<path d="M915.7,342.8 L919,346.4 L925,340.3" fill="none" stroke="#444444" stroke-width="1.3" />
<rect x="914" y="352" width="13" height="13" fill="#ffffff"/>
<rect x="914" y="352" width="13" height="1" fill="#333333"/>
<rect x="914" y="364" width="13" height="1" fill="#333333"/>
<rect x="914" y="352" width="1" height="13" fill="#333333"/>
<rect x="926" y="352" width="1" height="13" fill="#333333"/>
<path d="M915.7,357.8 L919,361.4 L925,355.3" fill="none" stroke="#444444" stroke-width="1.3" />
<rect x="914" y="367" width="13" height="13" fill="#ffffff"/>
<rect x="914" y="367" width="13" height="1" fill="#333333"/>
<rect x="914" y="379" width="13" height="1" fill="#333333"/>
<rect x="914" y="367" width="1" height="13" fill="#333333"/>
<rect x="926" y="367" width="1" height="13" fill="#333333"/>
<path d="M915.7,372.8 L919,376.4 L925,370.3" fill="none" stroke="#444444" stroke-width="1.3" />
<rect x="914" y="382" width="13" height="13" fill="#ffffff"/>
<rect x="914" y="382" width="13" height="1" fill="#333333"/>
<rect x="914" y="394" width="13" height="1" fill="#333333"/>
<rect x="914" y="382" width="1" height="13" fill="#333333"/>
<rect x="926" y="382" width="1" height="13" fill="#333333"/>
<path d="M915.7,387.8 L919,391.4 L925,385.3" fill="none" stroke="#444444" stroke-width="1.3" />
<rect x="914" y="397" width="13" height="13" fill="#ffffff"/>
<rect x="914" y="397" width="13" height="1" fill="#333333"/>
<rect x="914" y="409" width="13" height="1" fill="#333333"/>
<rect x="914" y="397" width="1" height="13" fill="#333333"/>
<rect x="926" y="397" width="1" height="13" fill="#333333"/>
<path d="M915.7,402.8 L919,406.4 L925,400.3" fill="none" stroke="#444444" stroke-width="1.3" />
<text x="931.5" y="302" font-size="12" font-weight="400" fill="#000" textLength="40.3" lengthAdjust="spacingAndGlyphs" font-family="Liberation Sans">1 - Main</text>
<text x="931.5" y="317" font-size="12" font-weight="400" fill="#000" textLength="35.0" lengthAdjust="spacingAndGlyphs" font-family="Liberation Sans">2 - Sub</text>
<text x="931.5" y="332" font-size="12" font-weight="400" fill="#000" textLength="12.0" lengthAdjust="spacingAndGlyphs" font-family="Liberation Sans">3 -</text>
<text x="931.5" y="347" font-size="12" font-weight="400" fill="#000" textLength="12.0" lengthAdjust="spacingAndGlyphs" font-family="Liberation Sans">4 -</text>
<text x="931.5" y="362" font-size="12" font-weight="400" fill="#000" textLength="12.0" lengthAdjust="spacingAndGlyphs" font-family="Liberation Sans">5 -</text>
<text x="931.5" y="377" font-size="12" font-weight="400" fill="#000" textLength="12.0" lengthAdjust="spacingAndGlyphs" font-family="Liberation Sans">6 -</text>
<text x="931.5" y="392" font-size="12" font-weight="400" fill="#000" textLength="12.0" lengthAdjust="spacingAndGlyphs" font-family="Liberation Sans">7 -</text>
<text x="931.5" y="407" font-size="12" font-weight="400" fill="#000" textLength="12.0" lengthAdjust="spacingAndGlyphs" font-family="Liberation Sans">8 -</text>
<text x="838.5" y="426" font-size="11" font-weight="400" fill="#0000ff" textLength="12.0" lengthAdjust="spacingAndGlyphs" font-family="Liberation Sans">All</text>
<rect x="839" y="427" width="11" height="1" fill="#0000ff"/>
<text x="860.5" y="426" font-size="11" font-weight="400" fill="#0000ff" textLength="23.2" lengthAdjust="spacingAndGlyphs" font-family="Liberation Sans">None</text>
<rect x="861" y="427" width="22" height="1" fill="#0000ff"/>
<text x="946.5" y="426" font-size="11" font-weight="400" fill="#0000ff" textLength="12.0" lengthAdjust="spacingAndGlyphs" font-family="Liberation Sans">All</text>
<rect x="947" y="427" width="11" height="1" fill="#0000ff"/>
<text x="968.5" y="426" font-size="11" font-weight="400" fill="#0000ff" textLength="23.0" lengthAdjust="spacingAndGlyphs" font-family="Liberation Sans">None</text>
<rect x="969" y="427" width="22" height="1" fill="#0000ff"/>
<text x="804.9" y="479" font-size="12" font-weight="400" fill="#000" textLength="106.6" lengthAdjust="spacingAndGlyphs" font-family="Liberation Sans">Prefix Level Override</text>
<rect x="801" y="488" width="290" height="21" fill="#e1e1e1"/>
<rect x="801" y="488" width="290" height="1" fill="#adadad"/>
<rect x="801" y="508" width="290" height="1" fill="#adadad"/>
<rect x="801" y="488" width="1" height="21" fill="#adadad"/>
<rect x="1090" y="488" width="1" height="21" fill="#adadad"/>
<text x="804.5" y="503" font-size="12" font-weight="400" fill="#000" textLength="72.0" lengthAdjust="spacingAndGlyphs" font-family="Liberation Sans">0 - No Override</text>
<path d="M1077.5,496.5 L1082,501 L1086.5,496.5" fill="none" stroke="#555555" stroke-width="1" />
<rect x="791" y="523" width="320" height="1" fill="#d8d8d8"/>
<rect x="791" y="665" width="320" height="1" fill="#d8d8d8"/>
<rect x="791" y="523" width="1" height="143" fill="#d8d8d8"/>
<rect x="1110" y="523" width="1" height="143" fill="#d8d8d8"/>
<rect x="798" y="517" width="122" height="12" fill="#fff"/>
<text x="799.5" y="528.2" font-size="12" font-weight="400" fill="#000" textLength="117.0" lengthAdjust="spacingAndGlyphs" font-family="Liberation Sans">Miscellaneous Properties</text>
<text x="857.5" y="550.6" font-size="12" font-weight="400" fill="#000" textLength="52.5" lengthAdjust="spacingAndGlyphs" font-family="Liberation Sans">Surcharge</text>
<rect x="915" y="535" width="176" height="20" fill="#ffffff"/>
<rect x="915" y="535" width="176" height="1" fill="#646464"/>
<rect x="915" y="554" width="176" height="1" fill="#646464"/>
<rect x="915" y="535" width="1" height="20" fill="#646464"/>
<rect x="1090" y="535" width="1" height="20" fill="#646464"/>
<text x="916.5" y="548" font-size="12" font-weight="400" fill="#000" textLength="33.8" lengthAdjust="spacingAndGlyphs" font-family="Liberation Sans">0.0000</text>
<text x="850.1" y="575.7" font-size="12" font-weight="400" fill="#000" textLength="59.9" lengthAdjust="spacingAndGlyphs" font-family="Liberation Sans">Tare Weight</text>
<rect x="915" y="563" width="176" height="20" fill="#ffffff"/>
<rect x="915" y="563" width="176" height="1" fill="#646464"/>
<rect x="915" y="582" width="176" height="1" fill="#646464"/>
<rect x="915" y="563" width="1" height="20" fill="#646464"/>
<rect x="1090" y="563" width="1" height="20" fill="#646464"/>
<text x="916.5" y="576" font-size="12" font-weight="400" fill="#000" textLength="33.8" lengthAdjust="spacingAndGlyphs" font-family="Liberation Sans">0.0000</text>
<text x="847.8" y="601.6" font-size="12" font-weight="400" fill="#000" textLength="62.2" lengthAdjust="spacingAndGlyphs" font-family="Liberation Sans">Guest Count</text>
<rect x="915" y="590" width="176" height="20" fill="#ffffff"/>
<rect x="915" y="590" width="176" height="1" fill="#646464"/>
<rect x="915" y="609" width="176" height="1" fill="#646464"/>
<rect x="915" y="590" width="1" height="20" fill="#646464"/>
<rect x="1090" y="590" width="1" height="20" fill="#646464"/>
<text x="916.5" y="603" font-size="12" font-weight="400" fill="#000" textLength="6.0" lengthAdjust="spacingAndGlyphs" font-family="Liberation Sans">0</text>
<text x="867.7" y="631" font-size="12" font-weight="400" fill="#000" textLength="42.3" lengthAdjust="spacingAndGlyphs" font-family="Liberation Sans">Quantity</text>
<rect x="915" y="619" width="176" height="20" fill="#ffffff"/>
<rect x="915" y="619" width="176" height="1" fill="#646464"/>
<rect x="915" y="638" width="176" height="1" fill="#646464"/>
<rect x="915" y="619" width="1" height="20" fill="#646464"/>
<rect x="1090" y="619" width="1" height="20" fill="#646464"/>
<text x="916.5" y="632" font-size="12" font-weight="400" fill="#000" textLength="5.0" lengthAdjust="spacingAndGlyphs" font-family="Liberation Sans">1</text>
</svg>
</body></html>
